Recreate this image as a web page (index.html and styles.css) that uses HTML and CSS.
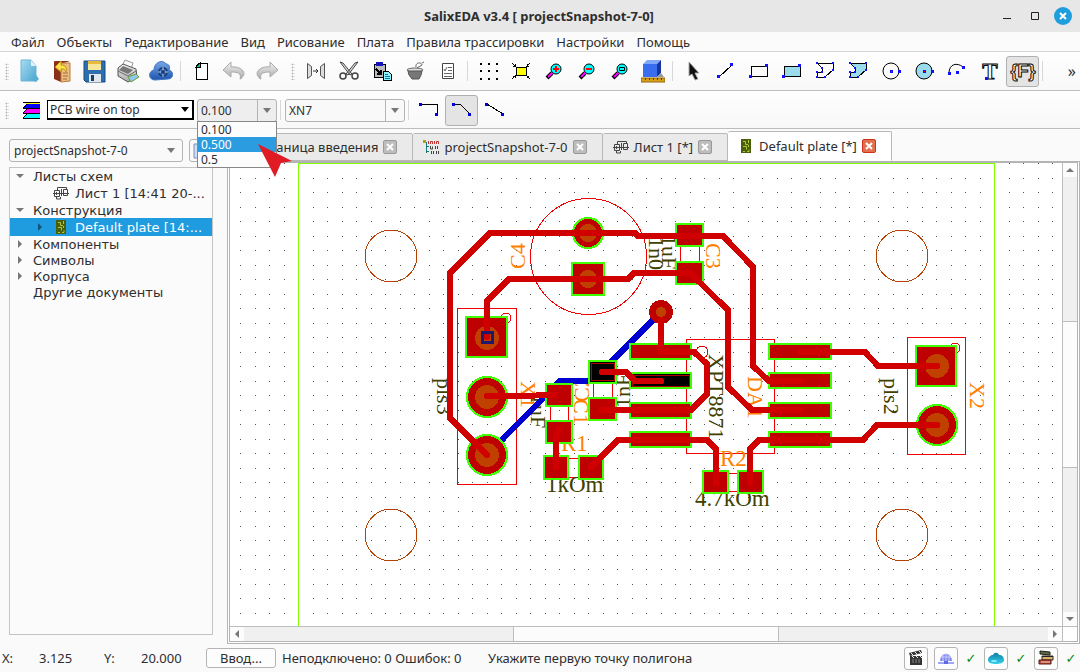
FILE: index.html
```html
<!DOCTYPE html>
<html lang="ru">
<head>
    <meta charset="UTF-8">
    <title>SalixEDA</title>
    <link rel="stylesheet" href="styles.css">
</head>
<body>
    <svg class="defs" width="0" height="0" aria-hidden="true">
        <defs>
            <linearGradient id="gPage" x2="1" y2="1"><stop offset="0" stop-color="#a8dcf2"/><stop offset="1" stop-color="#4aa6cf"/></linearGradient>
            <linearGradient id="gGray" x2="0" y2="1"><stop offset="0" stop-color="#f4f4f4"/><stop offset="1" stop-color="#a8a8a8"/></linearGradient>
            <linearGradient id="gCloud" x2="0" y2="1"><stop offset="0" stop-color="#78a8e8"/><stop offset="1" stop-color="#1d55ad"/></linearGradient>
            <linearGradient id="gTeal" x2="0" y2="1"><stop offset="0" stop-color="#0b7fa5"/><stop offset="1" stop-color="#36d0ec"/></linearGradient>
            <symbol id="sheet" viewBox="0 0 16 14">
                <path d="M1.5 4.500h5v6h-5zM10.500 3.500h4v6h-4zM8.500 3v7M0 7.500h16M4.500 4V1.500h9V3M3.500 11v2h4v-2M3.500 6v3" fill="none" stroke="#444"/>
            </symbol>
            <symbol id="plate" viewBox="0 0 10 14">
                <path d="M0 0h10v14H0z" fill="#48600c"/>
                <path d="M2 2.500h2.500v3H7M7.500 1v3M2 7.500h3.500v3M7.500 6v2M2 12.500h2M6 12.500h2v-2" fill="none" stroke="#b8c430"/>
            </symbol>
        </defs>
    </svg>

    <header class="titlebar">
        <h1>SalixEDA v3.4 [ projectSnapshot-7-0]</h1>
        <div class="window-buttons">
            <button aria-label="Свернуть"><svg width="18" height="18"><path d="M5 11.500h8" stroke="#222"/></svg></button>
            <button aria-label="Развернуть"><svg width="18" height="18"><path d="M5.500 5.500h7v7h-7z" fill="none" stroke="#222"/></svg></button>
            <button aria-label="Закрыть"><svg width="18" height="18"><circle cx="9" cy="9" r="9" fill="#1f9ede"/><path d="M6 6l6 6M12 6l-6 6" stroke="#fff" stroke-width="2"/></svg></button>
        </div>
    </header>

    <nav class="menubar">
        <button>Файл</button>
        <button>Объекты</button>
        <button>Редактирование</button>
        <button>Вид</button>
        <button>Рисование</button>
        <button>Плата</button>
        <button>Правила трассировки</button>
        <button>Настройки</button>
        <button>Помощь</button>
    </nav>

    <div class="toolbar">
        <span class="handle"></span>
        <button class="tool" aria-label="Новый"><svg class="icon" viewBox="0 0 24 24"><path d="M4 1h10l5 6v15H4z" fill="url(#gPage)" stroke="#6bb5d6"/><path d="M14 1v6h5z" fill="#dff3fb"/><path d="M19 16l3 4-3 3-4-2z" fill="#5aaed4"/></svg></button>
        <button class="tool" aria-label="Открыть"><svg class="icon" viewBox="0 0 24 24"><path d="M4 2l7 2v19l-7-3z" fill="#8a2f1a"/><path d="M4 2h16l-9 3z" fill="#8a2f1a"/><path d="M11 4h9v18l-9 1z" fill="#e9bd83" stroke="#b97a3c"/><path d="M13 14h5M13 17h5M13 20h4" stroke="#a56a30"/><path d="M5 8l6-6v4c5 0 6 3 5 7-1-3-2-3-5-3v3z" fill="#ffe14a" stroke="#c19410"/></svg></button>
        <button class="tool" aria-label="Сохранить"><svg class="icon" viewBox="0 0 24 24"><path d="M1 2h21v21H3l-2-2z" fill="#2b6fae" stroke="#194d80"/><path d="M5 2h13v9H5z" fill="#f7e79c"/><path d="M5 2h13v3H5z" fill="#e8b93c"/><path d="M6 15h12v8H6z" fill="#dfe6ec"/><path d="M8 16h3v6H8z" fill="#1d3e60"/></svg></button>
        <button class="tool" aria-label="Печать"><svg class="icon" viewBox="0 0 24 24"><path d="M9 1l8 3-2 6-9-3z" fill="#fafafa" stroke="#999"/><path d="M2 9l5-4 13 5 1 8-9 5-10-6z" fill="url(#gGray)" stroke="#555"/><path d="M7 7l10 4-5 4-9-4z" fill="#777"/><path d="M2 12l10 5 8-5" fill="none" stroke="#666"/><path d="M12 18l8-3 3 3-8 5z" fill="#8fc7ee" stroke="#68a038"/></svg></button>
        <button class="tool" aria-label="Облако"><svg class="icon" viewBox="0 0 24 24"><path d="M6 21c-7 0-7-9-1-10C5 3 14 0 17 5c4 0 4 4 3 6 6 2 4 9-1 9z" fill="url(#gCloud)" stroke="#3f76c4"/><circle cx="14" cy="13" r="4" fill="none" stroke="#173f7a" stroke-width="2"/><path d="M14 8v10M9 13h10" stroke="#b9cbe6"/><circle cx="14" cy="13" r="2" fill="#173f7a"/></svg></button>
        <span class="separator"></span>
        <button class="tool" aria-label="Лист"><svg class="icon pixel" viewBox="0 0 24 24"><path d="M10 4h8v16H7V7z" fill="#fff" stroke="#000"/><path d="M7 8l4-4v4z" fill="#18b89c" stroke="#000"/></svg></button>
        <button class="tool" aria-label="Отменить"><svg class="icon" viewBox="0 0 24 24"><path d="M1 11l8-8v5c8-1 13 3 13 7-1 3-3 5-4 5 2-6-3-7-9-7v5z" fill="url(#gGray)" stroke="#aaa"/></svg></button>
        <button class="tool" aria-label="Повторить"><svg class="icon" viewBox="0 0 24 24"><path d="M23 11l-8-8v5c-8-1-13 3-13 7 1 3 3 5 4 5-2-6 3-7 9-7v5z" fill="url(#gGray)" stroke="#aaa"/></svg></button>
        <span class="handle inner"></span>
        <button class="tool" aria-label="Зеркало"><svg class="icon" viewBox="0 0 24 24"><path d="M3.500 4.500v15l4-3v-9zM20.500 4.500v15l-4-3v-9z" fill="#ddd" stroke="#555"/><path d="M9 12h5M12 10l2 2-2 2" fill="none" stroke="#333"/></svg></button>
        <button class="tool" aria-label="Вырезать"><svg class="icon" viewBox="0 0 24 24"><path d="M3 3l3 1 9 11-2 1zM21 3l-3 1-9 11 2 1z" fill="#ddd" stroke="#444"/><circle cx="6" cy="17" r="3" fill="none" stroke="#444" stroke-width="1.500"/><circle cx="18" cy="17" r="3" fill="none" stroke="#444" stroke-width="1.500"/></svg></button>
        <button class="tool" aria-label="Вставить"><svg class="icon pixel" viewBox="0 0 24 24"><path d="M4 5h11v13H4z" fill="#bbb" stroke="#000"/><path d="M6 3h7v4H6z" fill="#1414b8"/><path d="M6 10l5 5M11 11v4H7" fill="none" stroke="#000" stroke-width="2"/><path d="M13 12h5l3 3v6h-8z" fill="#8ef4f8" stroke="#000"/><path d="M15 15h3M15 17h5M15 19h5" stroke="#0878a8"/></svg></button>
        <button class="tool" aria-label="Удалить"><svg class="icon" viewBox="0 0 24 24"><ellipse cx="12" cy="11" rx="8" ry="2" fill="#ddd" stroke="#666"/><path d="M5 12h14l-1 4-2 4H9l-3-4z" fill="#777" stroke="#555"/><path d="M13 8c-1-5 6-5 6-2l-5 3M19 4l2-1" fill="none" stroke="#666"/></svg></button>
        <button class="tool" aria-label="Свойства"><svg class="icon" viewBox="0 0 24 24"><path d="M6.500 4.500h11v15h-11z" fill="#fff" stroke="#444"/><path d="M8 10l1 2 2-4M12 8.500h4M12 11.500h4M8 14.500h8M8 17.500h8" fill="none" stroke="#666"/></svg></button>
        <span class="separator"></span>
        <button class="tool" aria-label="Сетка"><svg class="icon pixel" viewBox="0 0 24 24"><path d="M4 5h18M4 12h18M4 20h18" stroke="#000" stroke-width="2" stroke-dasharray="2 6"/></svg></button>
        <button class="tool" aria-label="Вписать"><svg class="icon pixel" viewBox="0 0 24 24"><path d="M7 8h10v8H7z" fill="#ff0" stroke="#000"/><path d="M3 4l4 4M21 4l-4 4M3 20l4-4M21 20l-4-4M4 7h2V5M20 7h-2V5M4 17h2v2M20 17h-2v2" fill="none" stroke="#000"/></svg></button>
        <button class="tool" aria-label="Увеличить"><svg class="icon" viewBox="0 0 24 24"><path d="M5 19l5-5" stroke="#000" stroke-width="4"/><path d="M6 18l5-5" stroke="#f0f" stroke-width="2"/><circle cx="14" cy="10" r="5" fill="#0ff" stroke="#000"/><path d="M11 10h6M14 7v6" stroke="#f00" stroke-width="2"/></svg></button>
        <button class="tool" aria-label="Уменьшить"><svg class="icon" viewBox="0 0 24 24"><path d="M5 19l5-5" stroke="#000" stroke-width="4"/><path d="M6 18l5-5" stroke="#f0f" stroke-width="2"/><circle cx="14" cy="10" r="5" fill="#0ff" stroke="#000"/><path d="M11 10h6" stroke="#f00" stroke-width="2"/></svg></button>
        <button class="tool" aria-label="Окно"><svg class="icon" viewBox="0 0 24 24"><path d="M5 19l5-5" stroke="#000" stroke-width="4"/><path d="M6 18l5-5" stroke="#f0f" stroke-width="2"/><circle cx="14" cy="10" r="5" fill="#0ff" stroke="#000"/><path d="M11.500 8.500h5v3h-5z" fill="none" stroke="#000"/></svg></button>
        <button class="tool" aria-label="Трёхмерный вид"><svg class="icon" viewBox="0 0 24 24"><path d="M2 5h14v13H2z" fill="#3a6cf0"/><path d="M2 5l4-4h14l-4 4z" fill="#7fa8fa"/><path d="M16 5l4-4v13l-4 4z" fill="#1536a0"/><path d="M16 18l4-4 3 4z" fill="#999"/><path d="M0 19h24v4H0z" fill="#d8a018" stroke="#94690a"/><path d="M4.500 19v2M8.500 19v2M12.500 19v2M16.500 19v2M20.500 19v2" stroke="#5c4000"/></svg></button>
        <span class="separator"></span>
        <button class="tool" aria-label="Выбор"><svg class="icon" viewBox="0 0 24 24"><path d="M8 3v14l3-2 3 6 3-1-3-6h4z" fill="#111" stroke="#aaa"/></svg></button>
        <button class="tool" aria-label="Линия"><svg class="icon pixel" viewBox="0 0 24 24"><path d="M5 18L18 6" stroke="#000"/><path d="M3 16h3v3H3zM16 4h3v3h-3z" fill="#11f"/></svg></button>
        <button class="tool" aria-label="Прямоугольник"><svg class="icon pixel" viewBox="0 0 24 24"><path d="M4 7h16v10H4z" fill="none" stroke="#000"/><path d="M2 16h3v3H2zM18 5h3v3h-3z" fill="#11f"/></svg></button>
        <button class="tool" aria-label="Залитый прямоугольник"><svg class="icon pixel" viewBox="0 0 24 24"><path d="M4 7h16v10H4z" fill="#9adcec" stroke="#000"/><path d="M2 16h3v3H2zM18 5h3v3h-3z" fill="#11f"/></svg></button>
        <button class="tool" aria-label="Полигон"><svg class="icon pixel" viewBox="0 0 24 24"><path d="M4 4h16v7l-8 7H4v-5h5V9z" fill="none" stroke="#000"/><path d="M3 3h2v2H3zM19 3h2v2h-2zM19 10h2v2h-2zM11 17h2v2h-2zM3 17h2v2H3zM3 12h2v2H3zM8 12h2v2H8zM8 8h2v2H8z" fill="#11f"/></svg></button>
        <button class="tool" aria-label="Залитый полигон"><svg class="icon pixel" viewBox="0 0 24 24"><path d="M4 4h16v7l-8 7H4v-5h5V9z" fill="#9adcec" stroke="#000"/><path d="M3 3h2v2H3zM19 3h2v2h-2zM19 10h2v2h-2zM11 17h2v2h-2zM3 17h2v2H3zM3 12h2v2H3zM8 12h2v2H8zM8 8h2v2H8z" fill="#11f"/></svg></button>
        <button class="tool" aria-label="Окружность"><svg class="icon" viewBox="0 0 24 24"><circle cx="12" cy="12" r="8" fill="none" stroke="#000"/><path d="M11 11h3v3h-3zM19 11h3v3h-3z" fill="#11f"/><path d="M12 12h1v1h-1z" fill="red"/></svg></button>
        <button class="tool" aria-label="Круг"><svg class="icon" viewBox="0 0 24 24"><circle cx="12" cy="12" r="8" fill="#9adcec" stroke="#000"/><path d="M11 11h3v3h-3zM19 11h3v3h-3z" fill="#11f"/><path d="M12 12h1v1h-1z" fill="red"/></svg></button>
        <button class="tool" aria-label="Дуга"><svg class="icon" viewBox="0 0 24 24"><path d="M4 14C4 5 12 3 18 8" fill="none" stroke="#000"/><path d="M3 13h3v3H3zM11 12h3v3h-3zM17 7h3v3h-3z" fill="#11f"/></svg></button>
        <button class="tool" aria-label="Текст"><svg class="icon" viewBox="0 0 24 24"><text x="12" y="20" class="glyph glyph-t">T</text><path d="M7 18h3v3H7z" fill="#11f"/></svg></button>
        <button class="tool pressed" aria-label="Фрагмент"><svg class="icon wide" viewBox="0 0 30 24"><text x="15" y="18" class="glyph">{F}</text></svg></button>
        <span class="separator"></span>
        <button class="more" aria-label="Ещё">»</button>
    </div>

    <div class="toolbar options">
        <span class="handle"></span>
        <svg class="layers" viewBox="0 0 18 18"><g class="pixel"><path d="M1 1h17v2H3z" fill="#ff0"/><path d="M5 3h13v4H1z" fill="#00f"/><path d="M5 8h13v4H1z" fill="#f0f"/><path d="M5 13h13v4H1z" fill="#0ff"/><path d="M1 1h17M1 7h17M1 12h17M1 17h17M1 7l4-4M1 12l4-4M1 17l4-4" stroke="#000" fill="none"/></g></svg>
        <select class="layer-select" aria-label="Слой"><option>PCB wire on top</option></select>
        <div class="combo">
            <select class="width-select" aria-label="Ширина"><option>0.100</option><option>0.500</option><option>0.5</option></select>
            <ul class="popup">
                <li>0.100</li>
                <li class="current">0.500</li>
                <li>0.5</li>
            </ul>
            <svg class="pointer" width="34" height="33"><path d="M0 0l34 17-11 2-6 14z" fill="#e01b24"/></svg>
        </div>
        <span class="separator"></span>
        <select class="net-select" aria-label="Цепь"><option>XN7</option></select>
        <span class="separator"></span>
        <button class="tool" aria-label="Прямой угол"><svg class="icon pixel" viewBox="0 0 24 24"><path d="M4 6h16v10" fill="none" stroke="#000"/><path d="M2 5h3v3H2zM18 15h3v3h-3z" fill="#00d"/></svg></button>
        <button class="tool pressed" aria-label="Скошенный угол"><svg class="icon pixel" viewBox="0 0 24 24"><path d="M4 6h6l10 10" fill="none" stroke="#000"/><path d="M2 5h3v3H2zM18 15h3v3h-3z" fill="#00d"/></svg></button>
        <button class="tool" aria-label="Произвольный угол"><svg class="icon pixel" viewBox="0 0 24 24"><path d="M4 6l16 10" fill="none" stroke="#000"/><path d="M2 5h3v3H2zM18 15h3v3h-3z" fill="#00d"/></svg></button>
    </div>

    <main class="workspace">
        <aside class="dock">
            <div class="project-row">
                <select class="project-select" aria-label="Проект"><option>projectSnapshot-7-0</option></select>
                <button class="page-button" aria-label="Документ"><svg width="16" height="16"><path d="M1 1h14v14H1z" fill="#cfdcf4" stroke="#7c90ba"/></svg></button>
            </div>
            <ul class="tree">
                <li><span class="arrow open"></span>Листы схем</li>
                <li class="child"><svg class="tree-icon"><use href="#sheet"/></svg>Лист 1 [14:41 20-...</li>
                <li><span class="arrow open"></span>Конструкция</li>
                <li class="child selected"><span class="arrow"></span><svg class="tree-icon"><use href="#plate"/></svg>Default plate [14:...</li>
                <li><span class="arrow"></span>Компоненты</li>
                <li><span class="arrow"></span>Символы</li>
                <li><span class="arrow"></span>Корпуса</li>
                <li class="leaf">Другие документы</li>
            </ul>
        </aside>

        <section class="documents">
            <div class="tabs">
                <div class="tab intro"><button class="tab-label">Страница введения</button><button class="close" aria-label="Закрыть вкладку"></button></div>
                <div class="tab"><svg class="tab-icon" viewBox="0 0 16 14"><path d="M1 2.500h3M3.500 2v11M3 6.500h3M3 11.500h3" stroke="#157878" fill="none"/><path d="M0 0h3v3H0z" fill="#aaa010"/><path d="M5.500 1v3M7.500 4V1.500h2V4M11.500 1v3M13.500 4V1.500h2V4" stroke="#b33" fill="none"/><path d="M7.500 6v3h2V6.500M12.500 6v3M14.500 6v3M8.500 11v3M10.500 11v3M13.500 11v3M15.500 11v3" stroke="#444" fill="none"/></svg><button class="tab-label">projectSnapshot-7-0</button><button class="close" aria-label="Закрыть вкладку"></button></div>
                <div class="tab"><svg class="tab-icon"><use href="#sheet"/></svg><button class="tab-label">Лист 1 [*]</button><button class="close" aria-label="Закрыть вкладку"></button></div>
                <div class="tab active"><svg class="tab-icon"><use href="#plate"/></svg><button class="tab-label">Default plate [*]</button><button class="close" aria-label="Закрыть вкладку"></button></div>
            </div>
            <div class="frame">
                <svg class="board">
                    <defs>
                        <pattern id="grid" x="240" y="178" width="29" height="29" patternUnits="userSpaceOnUse">
                            <path d="M0 0h1v1H0zM15 0h1v1h-1zM0 14h1v1H0zM15 14h1v1h-1z" fill="#555"/>
                        </pattern>
                    </defs>
                    <g transform="translate(-230 -163)">
                        <rect x="230" y="163" width="3000" height="2000" fill="url(#grid)"/>
                        <path class="outline" d="M298.500 2000V163.500H994.500V2000"/>

                        <g class="holes">
                            <circle cx="391" cy="256" r="26"/>
                            <circle cx="902" cy="256" r="26"/>
                            <circle cx="391" cy="535" r="26"/>
                            <circle cx="902" cy="535" r="26"/>
                        </g>

                        <!-- component bodies -->
                        <g class="bodies">
                            <circle cx="588.500" cy="256.500" r="58"/>
                            <rect x="457.500" y="308.500" width="59" height="176"/>
                            <circle cx="506" cy="318" r="5"/>
                            <rect x="686.500" y="339.500" width="88" height="114"/>
                            <circle cx="702" cy="352" r="6"/>
                            <rect x="907.500" y="337.500" width="58" height="117"/>
                            <circle cx="955" cy="348" r="5"/>
                            <path d="M680.500 240v30M699.500 240v30M550.500 400v24M568.500 400v24M593.500 380v20M612.500 380v20M560 458.500h24M560 477.500h24M720 473.500h24M720 491.500h24"/>
                        </g>

                        <g class="values vertical">
                            <text transform="translate(437 378) rotate(90)">pls3</text>
                            <text transform="translate(884 378) rotate(90)">pls2</text>
                            <text transform="translate(531 394) rotate(90)">1uF</text>
                            <text transform="translate(630 408) rotate(-90)">1nF</text>
                            <text transform="translate(649 237) rotate(90)">1n0</text>
                            <text transform="translate(662 235) rotate(90)">1uF</text>
                            <text transform="translate(709 354) rotate(90)">XPT8871</text>
                        </g>
                        <g class="values">
                            <text x="546" y="492">1kOm</text>
                            <text x="695" y="506">4.7kOm</text>
                        </g>
                        <g class="refs vertical">
                            <text transform="translate(525 269) rotate(-90)">C4</text>
                            <text transform="translate(706 243) rotate(90)">C3</text>
                            <text transform="translate(521 381) rotate(90)">X1</text>
                            <text transform="translate(574 399) rotate(90)">C1</text>
                            <text transform="translate(589 402) rotate(-90)">C2</text>
                            <text transform="translate(748 376) rotate(90)">DA1</text>
                            <text transform="translate(970 382) rotate(90)">X2</text>
                        </g>
                        <g class="refs">
                            <text x="561" y="451">R1</text>
                            <text x="720" y="466">R2</text>
                        </g>

                        <path class="wire bottom" d="M661 312L592 381H560L487 455"/>

                        <g class="pads">
                            <rect x="466" y="317" width="41" height="40"/>
                            <circle cx="487" cy="397" r="20"/>
                            <circle cx="487" cy="455" r="20"/>
                            <rect x="916" y="346" width="40" height="40"/>
                            <circle cx="937" cy="425" r="20"/>
                            <rect x="630" y="344" width="61" height="15"/>
                            <rect x="630" y="403" width="61" height="15"/>
                            <rect x="630" y="432" width="61" height="15"/>
                            <rect x="769" y="344" width="62" height="15"/>
                            <rect x="769" y="373" width="62" height="15"/>
                            <rect x="769" y="403" width="62" height="15"/>
                            <rect x="769" y="432" width="62" height="15"/>
                            <rect x="546" y="384" width="26" height="22"/>
                            <rect x="546" y="421" width="26" height="22"/>
                            <rect x="589" y="398" width="27" height="22"/>
                            <rect x="544" y="456" width="24" height="23"/>
                            <rect x="579" y="456" width="24" height="23"/>
                            <rect x="703" y="471" width="25" height="22"/>
                            <rect x="738" y="471" width="25" height="22"/>
                            <rect x="676" y="224" width="27" height="22"/>
                            <rect x="676" y="262" width="27" height="22"/>
                            <rect x="572" y="263" width="32" height="32"/>
                            <circle cx="588" cy="233" r="15"/>
                            <g class="free">
                                <rect x="589" y="361" width="27" height="22"/>
                                <rect x="630" y="373" width="61" height="15"/>
                            </g>
                        </g>
                        <path class="mask" d="M591.500 363.500h23v17h-23zM632.500 375.500h57v11h-57z"/>
                        <circle cx="661" cy="312" r="12" fill="#be0000"/>

                        <g class="drills">
                            <circle cx="487" cy="338" r="12"/>
                            <circle cx="487" cy="397" r="12"/>
                            <circle cx="487" cy="455" r="12"/>
                            <circle cx="937" cy="366" r="12"/>
                            <circle cx="937" cy="425" r="12"/>
                            <circle cx="588" cy="233" r="9"/>
                            <circle cx="588" cy="279" r="9"/>
                            <circle cx="661" cy="312" r="5"/>
                        </g>

                        <g class="wire">
                            <path d="M487 455L450 418V273L490 233H635L638 236H723L753 267V366L769 381H800"/>
                            <path d="M487 337V301L509 279H628L634 273H690L728 310V387L752 410H800"/>
                            <path d="M661 320V352H694L707 364V394L691 410H602"/>
                            <path d="M602 372H626L635 381H661"/>
                            <path d="M487 396H517L555 395"/>
                            <path d="M559 430L556 436V467"/>
                            <path d="M591 467L618 440H707L716 449V483"/>
                            <path d="M750 483V449L759 440H863L877 425H937"/>
                            <path d="M800 352H865L878 366H937"/>
                        </g>
                        <rect x="482.500" y="332.500" width="10" height="10" fill="none" stroke="#20186c" stroke-width="3"/>
                    </g>
                </svg>
                <div class="vscroll">
                    <button class="step up" aria-label="Вверх"></button>
                    <div class="groove"><div class="thumb"></div></div>
                    <button class="step down" aria-label="Вниз"></button>
                </div>
                <div class="hscroll">
                    <button class="step left" aria-label="Влево"></button>
                    <div class="groove"><div class="thumb"></div></div>
                    <button class="step right" aria-label="Вправо"></button>
                </div>
                <div class="corner"></div>
            </div>
        </section>
    </main>

    <footer class="statusbar">
        <span class="axis">X:</span><span class="coord">3.125</span>
        <span class="axis">Y:</span><span class="coord">20.000</span>
        <button class="enter">Ввод...</button>
        <span class="errors">Неподключено: 0 Ошибок: 0</span>
        <span class="hint">Укажите первую точку полигона</span>
        <div class="services">
            <button aria-label="Запись"><svg width="16" height="16"><path d="M2 6h12v9H2z" fill="#333"/><path d="M1 3l12-3 1 3L2 6z" fill="#333"/><path d="M3 3l2 2M7 2l2 2M11 1l2 2M4 6l2 2M8 6l2 2M12 6l2 2" stroke="#eee"/><path d="M4 10h8M4 12h8" stroke="#888" stroke-dasharray="2 1"/></svg></button>
            <button aria-label="Сервер"><svg width="16" height="16"><path d="M2 11a6 7 0 0 1 12 0z" fill="#7f86f0"/><path d="M8 3v8M5 4v7M11 4v7M3 7h10" stroke="#c8ccff"/><path d="M0 12h16v2H0z" fill="#a0a6f8"/><path d="M6 11h4v3H6z" fill="#6068e0"/></svg></button>
            <span class="ok">✓</span>
            <button aria-label="Облако"><svg width="16" height="16"><path d="M0 10c0-3 3-5 5-5 1-3 5-3 6 0 3 0 5 2 5 5s-4 4-8 4-8-1-8-4z" fill="url(#gTeal)"/><ellipse cx="6" cy="11" rx="3" ry="1" fill="#8ff0ff"/></svg></button>
            <span class="ok">✓</span>
            <button aria-label="Библиотека"><svg width="16" height="16"><path d="M2 1l10 1v3L2 4z" fill="#5c6a3a" stroke="#222"/><path d="M4 6h11v4H4z" fill="#d9b36e" stroke="#33240e"/><path d="M4 6h11v1H4z" fill="#222"/><path d="M1 10h12v4H1z" fill="#b94a40" stroke="#5a1712"/><path d="M3 12h9" stroke="#f3d9b0"/></svg></button>
            <span class="ok">✓</span>
        </div>
    </footer>
</body>
</html>
```
FILE: styles.css
```css
* {
    box-sizing: border-box;
}

body {
    margin: 0;
    height: 100vh;
    display: flex;
    flex-direction: column;
    overflow: hidden;
    background: #fafafa;
    color: #2e2e2e;
    font-family: "Noto Sans", sans-serif;
    font-size: 13px;
}

button,
select {
    font: inherit;
    color: inherit;
    margin: 0;
    padding: 0;
    border: 0;
    background: none;
}

ul {
    list-style: none;
    margin: 0;
    padding: 0;
}

svg {
    display: block;
    flex: none;
}

.defs {
    position: absolute;
}

.titlebar {
    display: grid;
    grid-template-columns: 1fr auto 1fr;
    align-items: center;
    height: 32px;
    padding-right: 8px;
    padding-left: 6px;
    background: #e7e7e7;
    flex: none;
}

.titlebar h1 {
    grid-column: 2;
    margin: 0;
    font-size: 13px;
    font-weight: bold;
}

.window-buttons {
    display: flex;
    justify-content: flex-end;
    gap: 10px;
}

.menubar {
    display: flex;
    gap: 12px;
    height: 20px;
    padding: 0 11px;
    border-bottom: 1px solid #d6d6d6;
    background: #fbfbfb;
    white-space: nowrap;
    flex: none;
}

.toolbar {
    display: flex;
    align-items: center;
    height: 39px;
    padding-left: 5px;
    border-bottom: 1px solid #bdbdbd;
    background: linear-gradient(#fefefe, #f8f8f8);
    flex: none;
}

.toolbar.options {
    height: 38px;
    padding-top: 1px;
}

.handle {
    width: 4px;
    height: 17px;
    margin-right: 3px;
    background: radial-gradient(circle, #b5b5b5 30%, transparent 60%) 0 0 / 3px 3px;
}

.handle.inner {
    margin: 0 4px 0 8px;
}

.separator {
    width: 1px;
    height: 20px;
    margin: 0 3px;
    background: #d8d8d8;
}

.tool {
    display: flex;
    align-items: center;
    justify-content: center;
    width: 33px;
    height: 31px;
    flex: none;
    border: 1px solid transparent;
    border-radius: 3px;
}

.tool.pressed {
    border-color: #b0b0b0;
    background: #e4e4e4;
}

.icon {
    width: 24px;
    height: 24px;
}

.icon.wide {
    width: 30px;
}

.pixel {
    shape-rendering: crispEdges;
}

.glyph {
    font: bold 18px "Liberation Sans", sans-serif;
    text-anchor: middle;
    fill: #fff;
    stroke: #000;
    stroke-width: 1px;
}

.glyph-t {
    font: bold 23px "Liberation Serif", serif;
}

.more {
    margin-left: auto;
    padding: 0 4px;
    font-size: 16px;
}

select {
    appearance: none;
    height: 23px;
    padding: 0 5px;
    border: 1px solid #b4b4b4;
    border-radius: 3px;
    background-color: #f9f9f9;
    background-repeat: no-repeat;
    background-position: right 7px center;
    background-image: url("data:image/svg+xml,%3Csvg xmlns='http://www.w3.org/2000/svg' width='8' height='5'%3E%3Cpath d='M0 0h8L4 5z' fill='%23777'/%3E%3C/svg%3E");
    font-size: 12px;
}

.layers {
    width: 18px;
    height: 18px;
    margin: 0 7px 0 10px;
}

.layer-select {
    width: 147px;
    height: 20px;
    padding: 0 2px;
    border: 1px solid #000;
    border-width: 1px 2px 2px 1px;
    border-radius: 0;
    background-color: #fff;
    background-position: right 3px center;
    background-image: url("data:image/svg+xml,%3Csvg xmlns='http://www.w3.org/2000/svg' width='8' height='5'%3E%3Cpath d='M0 0h8L4 5z'/%3E%3C/svg%3E");
}

.combo {
    position: relative;
    margin-left: 3px;
}

.width-select,
.net-select {
    display: block;
    padding: 0 3px;
    background-image: url("data:image/svg+xml,%3Csvg xmlns='http://www.w3.org/2000/svg' width='19' height='21'%3E%3Cpath d='M.5 0v21' stroke='%23b4b4b4'/%3E%3Cpath d='M6 8h8l-4 5z' fill='%23777'/%3E%3C/svg%3E");
    background-position: right 0 center;
}

.width-select {
    width: 80px;
    background-color: #eee;
}

.net-select {
    width: 120px;
    margin-left: 1px;
}

.popup {
    position: absolute;
    z-index: 2;
    top: 22px;
    left: 0;
    width: 80px;
    border: 1px solid #888;
    background: #fcfcfc;
    font-size: 12px;
}

.popup li {
    height: 15px;
    padding-left: 3px;
    line-height: 15px;
}

.popup .current {
    background: #2b9ce0;
    color: #fff;
}

.pointer {
    position: absolute;
    z-index: 3;
    top: 45px;
    left: 61px;
}

.workspace {
    display: flex;
    flex: 1;
    min-height: 0;
    padding-left: 9px;
    gap: 14px;
}

.dock {
    display: flex;
    flex-direction: column;
    width: 204px;
    flex: none;
    padding: 10px 0 9px;
    gap: 5px;
}

.project-row {
    display: flex;
    gap: 6px;
}

.project-select {
    flex: 1;
    min-width: 0;
    padding: 0 4px;
}

.page-button {
    display: grid;
    place-items: center;
    width: 24px;
    height: 23px;
    border: 1px solid #b4b4b4;
    border-radius: 3px;
}

.tree {
    flex: 1;
    border: 1px solid #c4c4c4;
    background: #fbfbfb;
    font-family: "DejaVu Sans", sans-serif;
    font-size: 13px;
    white-space: nowrap;
    overflow: hidden;
}

.tree li {
    display: flex;
    align-items: center;
    height: 16px;
    padding-left: 6px;
}

.tree .child {
    height: 18px;
    padding-left: 42px;
}

.tree .leaf {
    padding-left: 23px;
}

.tree .selected {
    padding-left: 26px;
    background: #1f9cdf;
    color: #fff;
}

.arrow {
    width: 8px;
    height: 8px;
    margin-right: 9px;
    background: #777;
    clip-path: polygon(25% 0, 75% 50%, 25% 100%);
}

.arrow.open {
    clip-path: polygon(0 25%, 100% 25%, 50% 75%);
}

.selected .arrow {
    margin-right: 8px;
    background: #10557c;
}

.tree-icon {
    width: 18px;
    height: 14px;
    margin-right: 5px;
}

.documents {
    display: flex;
    flex: 1;
    flex-direction: column;
    min-width: 0;
    padding-top: 2px;
}

.tabs {
    display: flex;
    align-items: flex-end;
    height: 30px;
}

.tab {
    display: flex;
    align-items: center;
    gap: 5px;
    height: 28px;
    padding: 0 15px 0 10px;
    border: 1px solid #b8b8b8;
    border-left: 0;
    border-radius: 2px 2px 0 0;
    background: #eaeaea;
    white-space: nowrap;
}

.tab.intro {
    padding-left: 26px;
    border-left: 1px solid #b8b8b8;
}

.tab.active {
    height: 30px;
    border-bottom-color: #fff;
    background: #fff;
}

.tab-icon {
    width: 16px;
    height: 14px;
}

.close {
    width: 14px;
    height: 14px;
    border: 1px solid #999;
    border-radius: 2px;
    background: #bdbdbd url("data:image/svg+xml,%3Csvg xmlns='http://www.w3.org/2000/svg' width='8' height='8'%3E%3Cpath d='M1 1l6 6M7 1L1 7' stroke='%23fff' stroke-width='2'/%3E%3C/svg%3E") center no-repeat;
}

.active .close {
    border-color: #d0301c;
    background-color: #e2704e;
}

.frame {
    display: grid;
    grid-template-columns: 1fr 15px;
    grid-template-rows: 1fr 15px;
    flex: 1;
    min-height: 0;
    border: 3px double #b4b4b4;
    border-top-width: 2px;
    background: #fff;
}

.board {
    width: 100%;
    height: 100%;
    min-width: 0;
    min-height: 0;
    overflow: hidden;
    shape-rendering: crispEdges;
}

.board .outline {
    fill: none;
    stroke: #80ff00;
}

.board .holes circle {
    fill: none;
    stroke: #b84000;
}

.board .bodies {
    fill: none;
    stroke: #f00000;
}

.board text {
    font-family: "Liberation Serif", serif;
    font-size: 23px;
}

.board .vertical text {
    font-size: 22px;
}

.board .values {
    fill: #404000;
}

.board .refs {
    fill: #ff8000;
}

.board .pads {
    fill: #be0000;
    stroke: #40ff00;
    stroke-width: 2px;
}

.board .free {
    fill: #000;
}

.board .mask {
    fill: none;
    stroke: #b00000;
}

.board .drills {
    fill: #c04000;
}

.board .wire {
    fill: none;
    stroke: #d00000;
    stroke-width: 6px;
    stroke-linecap: round;
    stroke-linejoin: round;
}

.board .wire.bottom {
    stroke: #0000d0;
}

.vscroll,
.hscroll {
    display: flex;
    background: #f0f0f0;
}

.vscroll {
    flex-direction: column;
    border-left: 1px solid #bdbdbd;
}

.hscroll {
    border-top: 1px solid #bdbdbd;
}

.groove {
    display: flex;
    flex: 1;
    justify-content: center;
}

.vscroll .groove {
    flex-direction: column;
}

.thumb {
    border: 1px solid #bdbdbd;
    background: #fcfcfc;
}

.vscroll .thumb {
    height: 34%;
    border-width: 1px 0;
}

.hscroll .thumb {
    width: 33%;
    border-width: 0 1px;
}

.step {
    display: grid;
    place-items: center;
    width: 14px;
    height: 14px;
    background: #fcfcfc;
}

.step::before {
    content: "";
    width: 8px;
    height: 8px;
    background: #777;
}

.up::before {
    clip-path: polygon(0 75%, 50% 25%, 100% 75%);
}

.down::before {
    clip-path: polygon(0 25%, 100% 25%, 50% 75%);
}

.left::before {
    clip-path: polygon(75% 0, 25% 50%, 75% 100%);
}

.right::before {
    clip-path: polygon(25% 0, 75% 50%, 25% 100%);
}

.corner {
    border: 1px solid #bdbdbd;
    border-width: 1px 0 0 1px;
}

.statusbar {
    display: flex;
    align-items: center;
    height: 28px;
    padding: 0 2px;
    flex: none;
    white-space: nowrap;
}

.axis {
    width: 37px;
}

.coord {
    width: 65px;
}

.enter {
    width: 70px;
    height: 20px;
    border: 1px solid #b4b4b4;
    border-radius: 3px;
    background: #fdfdfd;
}

.errors {
    width: 212px;
    padding-left: 6px;
}

.services {
    display: flex;
    align-items: center;
    gap: 6px;
    margin-left: auto;
}

.services button {
    display: grid;
    place-items: center;
    width: 24px;
    height: 23px;
    border: 1px solid #b4b4b4;
    border-radius: 3px;
    background: #fdfdfd;
}

.ok {
    width: 14px;
    color: #0a870a;
    font-family: "DejaVu Sans", sans-serif;
    font-size: 13px;
    text-align: center;
}
```
